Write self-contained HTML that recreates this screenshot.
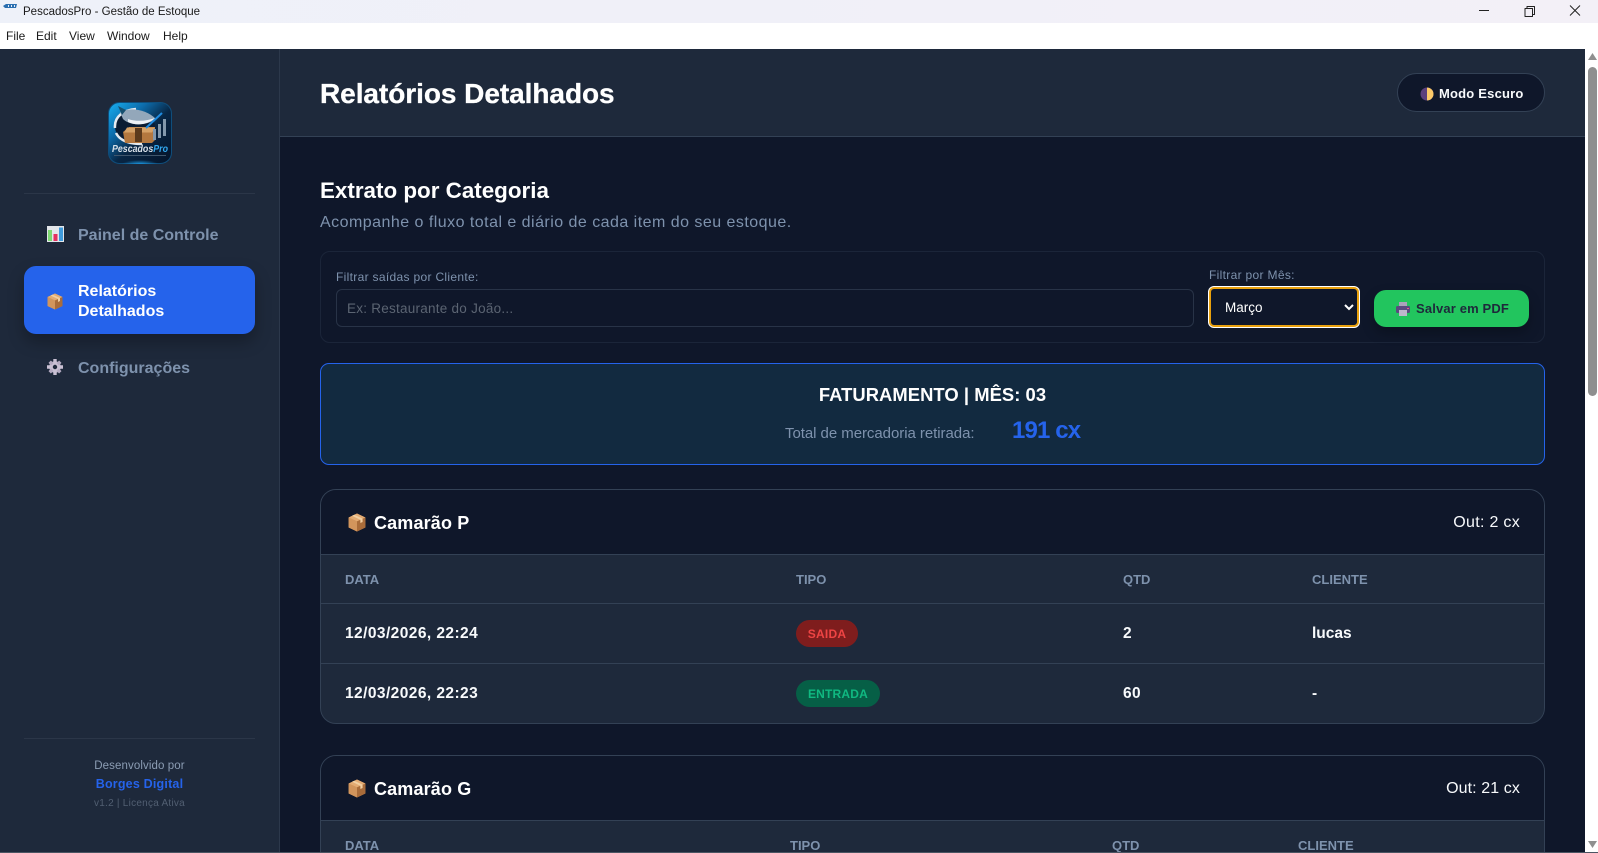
<!DOCTYPE html>
<html lang="pt-BR">
<head>
<meta charset="utf-8">
<title>PescadosPro - Gestão de Estoque</title>
<style>
*{box-sizing:border-box;margin:0;padding:0}
html,body{width:1598px;height:853px;overflow:hidden;background:#0f172a;font-family:"Liberation Sans",sans-serif;color:#fff}
#root{position:relative;width:1598px;height:853px;overflow:hidden;background:#0f172a}
.a{position:absolute;white-space:nowrap}
.b{font-weight:700}
.h{color:#7e92ad;font-size:13px;font-weight:700;letter-spacing:0;line-height:16px}
.c{font-size:15.5px;font-weight:700;line-height:18px;letter-spacing:.43px;color:#f8fafc}
.menu{font-size:12px;line-height:14px;top:29px;color:#1a1a1a}
.nav{font-size:16px;font-weight:700;line-height:20px;color:#7e92ad;left:78px}
svg{position:absolute;display:block}
input,select{font-family:"Liberation Sans",sans-serif}
input::placeholder{color:#5b6472;opacity:1}
</style>
</head>
<body>
<div id="root">
<!-- title bar -->
<div class="a" style="left:0;top:0;width:1598px;height:23px;background:linear-gradient(90deg,#eef1f9,#f1f0f8 60%,#f3f0f7)"></div>
<svg style="left:3px;top:3px" width="15" height="6" viewBox="0 0 15 6"><path d="M0 3 L3 1 H14 L13 5 H2Z" fill="#2b6fb0"/><path d="M5 2h1v2H5zM8 2h1v2H8zM11 2h1v2h-1z" fill="#e8eef8"/></svg>
<div class="a" style="left:23px;top:5px;font-size:11.5px;line-height:15px;color:#1a1a1a">PescadosPro - Gestão de Estoque</div>
<svg style="left:1470px;top:4px" width="120" height="16" viewBox="0 0 120 16" fill="none" stroke="#222" stroke-width="1"><path d="M9 6.5H19"/><path d="M55 4.5V12.5H62.5V4.5ZM57 4.5V2.5H64.5V10.5H62.5" stroke-linejoin="round"/><path d="M100 1.5L110 11.5M110 1.5L100 11.5"/></svg>
<!-- menu -->
<div class="a" style="left:0;top:23px;width:1598px;height:26px;background:#fff"></div>
<div class="a menu" style="left:6px">File</div>
<div class="a menu" style="left:36px">Edit</div>
<div class="a menu" style="left:69px">View</div>
<div class="a menu" style="left:107px">Window</div>
<div class="a menu" style="left:163px">Help</div>

<!-- sidebar -->
<div class="a" style="left:0;top:49px;width:280px;height:803px;background:#1e293b;border-right:1px solid #2c384b"></div>
<svg style="left:108px;top:102px" width="64" height="62" viewBox="0 0 64 62">
<defs>
<linearGradient id="lg" x1="0" y1="0" x2="1" y2="1"><stop offset="0" stop-color="#18b0f2"/><stop offset=".3" stop-color="#0d6cab"/><stop offset=".55" stop-color="#082644"/><stop offset="1" stop-color="#06142a"/></linearGradient>
<radialGradient id="gl" cx=".5" cy="1" r=".5"><stop offset="0" stop-color="#1a8fd6"/><stop offset="1" stop-color="#1a8fd6" stop-opacity="0"/></radialGradient>
</defs>
<rect x=".5" y=".5" width="63" height="61" rx="11" fill="url(#lg)" stroke="#0f4e7c"/>
<rect x="14" y="54" width="36" height="8" fill="url(#gl)"/>
<ellipse cx="27" cy="25" rx="20" ry="16" fill="#0a1c33"/>
<path d="M7 26C6 14 16 8 28 7M8 31C12 39 22 42 34 42" fill="none" stroke="#e5ebf1" stroke-width="2.500"/>
<path d="M12 10C22 5 38 7 48 17C38 24 22 24 15 17Z" fill="#93a7ba"/><path d="M20 17c9 3 19 2 27-1c-7 7-19 8-27 4z" fill="#eef2f6"/><path d="M10 4l8 4-4 5z" fill="#17506f"/>
<path d="M15 30L21 25H47V38L44 41H17Z" fill="#b4783f"/><path d="M19 25.500H47L44 30.500H16Z" fill="#d6a267"/><rect x="27" y="26" width="7" height="14" fill="#5c3a1c"/>
<path d="M45 38V27h3v11zM50 36V22h3v14zM55 34V17h3v17z" fill="#8298ac"/><path d="M38 26L54 11" stroke="#1f8be0" stroke-width="2"/>
<text x="32" y="50" text-anchor="middle" font-family="Liberation Sans,sans-serif" font-size="10" font-weight="700" font-style="italic" fill="#d9e1e9" textLength="56" lengthAdjust="spacingAndGlyphs">Pescados<tspan fill="#32a8ef">Pro</tspan></text>
<rect x="6" y="53" width="52" height="1" fill="#40566c"/>
</svg>
<div class="a" style="left:24px;top:193px;width:231px;height:1px;background:#2b3648"></div>

<svg style="left:47px;top:226px" width="17" height="16" viewBox="0 0 17 16"><rect width="17" height="16" fill="#e3e6ea"/><rect x="1" y="4" width="4" height="11" fill="#7ed872"/><rect x="6.5" y="8" width="4" height="7" fill="#e4305f"/><rect x="12" y="1.500" width="4" height="13.500" fill="#3f9bdc"/></svg>
<div class="a nav" style="top:226px">Painel de Controle</div>

<div class="a" style="left:24px;top:266px;width:231px;height:68px;background:#2563eb;border-radius:12px;box-shadow:0 8px 16px rgba(0,0,0,.28)"></div>
<svg style="left:47px;top:293px" width="16" height="17" viewBox="0 0 16 17"><path d="M8 .5L15.500 4V13L8 16.500L.5 13V4Z" fill="#c98a52"/><path d="M8 .5L15.500 4L8 7.500L.5 4Z" fill="#e3ab73"/><path d="M8 7.500V16.500L.5 13V4Z" fill="#d2955c"/><path d="M8 7.500V16.500L15.500 13V4Z" fill="#a96c3a"/><path d="M3.500 2.500L11 6V9L13 8V5L5.500 1.600Z" fill="#f2cfa1"/></svg>
<div class="a nav" style="top:282px;color:#fff">Relatórios<br>Detalhados</div>

<svg style="left:47px;top:359px" width="16" height="16" viewBox="0 0 16 16"><circle cx="8" cy="8" r="5.800" fill="#c9c0d3"/><circle cx="8" cy="8" r="2.200" fill="#1e293b"/><path d="M6.300 0h3.400v3.500h-3.400zM6.300 12.500h3.400V16h-3.400zM0 6.300h3.500v3.400H0zM12.500 6.300H16v3.400h-3.500z" fill="#c9c0d3"/><path d="M1.500 3.900L3.900 1.500 6.500 4 4 6.500zM12.100 1.500L14.500 3.900 12 6.500 9.500 4zM3.900 14.500L1.500 12.100 4 9.500 6.500 12zM14.500 12.100L12.100 14.500 9.500 12 12 9.500z" fill="#b5abc2"/></svg>
<div class="a nav" style="top:359px">Configurações</div>

<div class="a" style="left:24px;top:738px;width:231px;height:1px;background:#2b3648"></div>
<div class="a" style="left:0;width:279px;top:759px;text-align:center;font-size:11.500px;line-height:14px;color:#8c9db4;letter-spacing:.1px">Desenvolvido por</div>
<div class="a b" style="left:0;width:279px;top:777px;text-align:center;font-size:12.500px;line-height:15px;color:#2563eb;letter-spacing:.2px">Borges Digital</div>
<div class="a" style="left:0;width:279px;top:797px;text-align:center;font-size:10px;line-height:13px;color:#525f72;letter-spacing:.25px">v1.2 | Licença Ativa</div>

<!-- header -->
<div class="a" style="left:280px;top:49px;width:1305px;height:88px;background:#1e293b;border-bottom:1px solid #334155"></div>
<div class="a b" style="left:320px;top:77px;font-size:28px;line-height:34px;letter-spacing:-.05px;-webkit-text-stroke:.3px #fff">Relatórios Detalhados</div>
<div class="a" style="left:1397px;top:73px;width:148px;height:39px;border-radius:19.500px;background:#0f172a;border:1px solid #334155"></div>
<svg style="left:1420px;top:87px" width="14" height="14" viewBox="0 0 14 14"><circle cx="7" cy="7" r="6.500" fill="#5b3f7c"/><path d="M7 .5A6.500 6.500 0 0 1 7 13.500Z" fill="#fbc969"/></svg>
<div class="a b" style="left:1439px;top:86px;font-size:13px;line-height:16px;color:#f8fafc;letter-spacing:.2px">Modo Escuro</div>

<!-- section -->
<div class="a b" style="left:320px;top:178px;font-size:22.4px;line-height:26px">Extrato por Categoria</div>
<div class="a" style="left:320px;top:213px;font-size:16px;line-height:19px;color:#7e92ad;letter-spacing:.47px">Acompanhe o fluxo total e diário de cada item do seu estoque.</div>

<div class="a" style="left:320px;top:251px;width:1225px;height:92px;border:1px solid #1b2539;border-radius:10px"></div>
<div class="a" style="left:336px;top:270px;font-size:12px;line-height:14px;color:#7e92ad;letter-spacing:.32px">Filtrar saídas por Cliente:</div>
<input class="a" placeholder="Ex: Restaurante do João..." style="left:336px;top:289px;width:858px;height:38px;background:#0f172a;border:1px solid #283347;border-radius:6px;padding:0 10px;font-size:13.500px;color:#fff;letter-spacing:.25px;outline:none">
<div class="a" style="left:1209px;top:268px;font-size:12px;line-height:14px;color:#7e92ad;letter-spacing:.32px">Filtrar por Mês:</div>
<select class="a" style="left:1209px;top:287px;width:150px;height:40px;background:#0f172a;color:#fff;border:2px solid #e9a10d;border-radius:5px;padding:0 10px;font-size:13.500px;box-shadow:0 0 0 1px #fff;outline:none;color-scheme:dark"><option>Março</option></select>
<div class="a" style="left:1374px;top:290px;width:155px;height:37px;border-radius:12px;background:#22c55e;box-shadow:0 6px 12px rgba(0,0,0,.25)"></div>
<svg style="left:1396px;top:302px" width="14" height="14" viewBox="0 0 14 14"><rect x="3" y="0" width="8" height="5" fill="#a9a3bb"/><rect x="0" y="4" width="14" height="7" rx="1.500" fill="#5a4a80"/><rect x="3" y="8" width="8" height="6" fill="#bdb7cc"/><rect x="11" y="6" width="2" height="1" fill="#e8568a"/></svg>
<div class="a b" style="left:1416px;top:301px;font-size:13px;line-height:16px;color:#1e293b;letter-spacing:.15px">Salvar em PDF</div>

<!-- summary -->
<div class="a" style="left:320px;top:363px;width:1225px;height:102px;background:#122a40;border:1px solid #2563eb;border-radius:9px"></div>
<div class="a b" style="left:320px;width:1225px;top:384px;text-align:center;font-size:18.4px;line-height:21px;letter-spacing:.05px">FATURAMENTO | MÊS: 03</div>
<div class="a" style="left:785px;top:424px;font-size:15px;line-height:19px;color:#7e92ad;letter-spacing:-.05px">Total de mercadoria retirada:</div>
<div class="a b" style="left:1012px;top:416px;font-size:24px;line-height:30px;color:#2563eb;letter-spacing:-.85px">191 cx</div>

<!-- card 1 -->
<div class="a" style="left:320px;top:489px;width:1225px;height:235px;background:#1e293b;border:1px solid #334155;border-radius:16px;overflow:hidden">
<div style="height:65px;background:#0f172a;border-bottom:1px solid #334155"></div>
<div style="position:absolute;left:0;right:0;top:113px;height:1px;background:#334155"></div>
<div style="position:absolute;left:0;right:0;top:173px;height:1px;background:#334155"></div>
</div>
<svg style="left:348px;top:513px" width="18" height="19" viewBox="0 0 16 17"><path d="M8 .5L15.500 4V13L8 16.500L.5 13V4Z" fill="#c98a52"/><path d="M8 .5L15.500 4L8 7.500L.5 4Z" fill="#e3ab73"/><path d="M8 7.500V16.500L.5 13V4Z" fill="#d2955c"/><path d="M8 7.500V16.500L15.500 13V4Z" fill="#a96c3a"/><path d="M3.500 2.500L11 6V9L13 8V5L5.500 1.600Z" fill="#f2cfa1"/></svg>
<div class="a b" style="left:374px;top:512px;font-size:18px;line-height:22px;letter-spacing:.15px">Camarão P</div>
<div class="a" style="right:78px;top:513px;font-size:16px;line-height:19px;color:#f8fafc;letter-spacing:.3px">Out: 2 cx</div>
<div class="a h" style="left:345px;top:572px">DATA</div>
<div class="a h" style="left:796px;top:572px">TIPO</div>
<div class="a h" style="left:1123px;top:572px">QTD</div>
<div class="a h" style="left:1312px;top:572px">CLIENTE</div>
<div class="a c" style="left:345px;top:625px">12/03/2026, 22:24</div>
<div class="a" style="left:796px;top:620px;width:62px;height:27px;border-radius:14px;background:#7f1d1d;color:#ef4444;font-size:12px;font-weight:700;line-height:28px;text-align:center;letter-spacing:.25px">SAIDA</div>
<div class="a c" style="left:1123px;top:625px">2</div>
<div class="a c" style="left:1312px;top:625px;letter-spacing:0">lucas</div>
<div class="a c" style="left:345px;top:685px">12/03/2026, 22:23</div>
<div class="a" style="left:796px;top:680px;width:84px;height:27px;border-radius:14px;background:#065f46;color:#10b981;font-size:12px;font-weight:700;line-height:28px;text-align:center;letter-spacing:.2px">ENTRADA</div>
<div class="a c" style="left:1123px;top:685px">60</div>
<div class="a c" style="left:1312px;top:685px">-</div>

<!-- card 2 -->
<div class="a" style="left:320px;top:755px;width:1225px;height:120px;background:#1e293b;border:1px solid #334155;border-radius:16px 16px 0 0;overflow:hidden">
<div style="height:65px;background:#0f172a;border-bottom:1px solid #334155"></div>
</div>
<svg style="left:348px;top:779px" width="18" height="19" viewBox="0 0 16 17"><path d="M8 .5L15.500 4V13L8 16.500L.5 13V4Z" fill="#c98a52"/><path d="M8 .5L15.500 4L8 7.500L.5 4Z" fill="#e3ab73"/><path d="M8 7.500V16.500L.5 13V4Z" fill="#d2955c"/><path d="M8 7.500V16.500L15.500 13V4Z" fill="#a96c3a"/><path d="M3.500 2.500L11 6V9L13 8V5L5.500 1.600Z" fill="#f2cfa1"/></svg>
<div class="a b" style="left:374px;top:778px;font-size:18px;line-height:22px;letter-spacing:.15px">Camarão G</div>
<div class="a" style="right:78px;top:779px;font-size:16px;line-height:19px;color:#f8fafc;letter-spacing:.1px">Out: 21 cx</div>
<div class="a h" style="left:345px;top:838px">DATA</div>
<div class="a h" style="left:790px;top:838px">TIPO</div>
<div class="a h" style="left:1112px;top:838px">QTD</div>
<div class="a h" style="left:1298px;top:838px">CLIENTE</div>

<!-- scrollbar -->
<div class="a" style="left:1585px;top:49px;width:13px;height:803px;background:#fff"></div>
<div class="a" style="left:1588px;top:67px;width:9px;height:329px;background:#8f8f8f;border-radius:5px"></div>
<svg style="left:1587px;top:53px" width="11" height="8" viewBox="0 0 11 8"><path d="M5.500 0L10 7H1Z" fill="#8f8f8f"/></svg>
<svg style="left:1587px;top:841px" width="11" height="8" viewBox="0 0 11 8"><path d="M1 0H10L5.500 7Z" fill="#8f8f8f"/></svg>
<div class="a" style="left:0;top:852px;width:1598px;height:1px;background:#4b5563"></div>
</div>
</body>
</html>
